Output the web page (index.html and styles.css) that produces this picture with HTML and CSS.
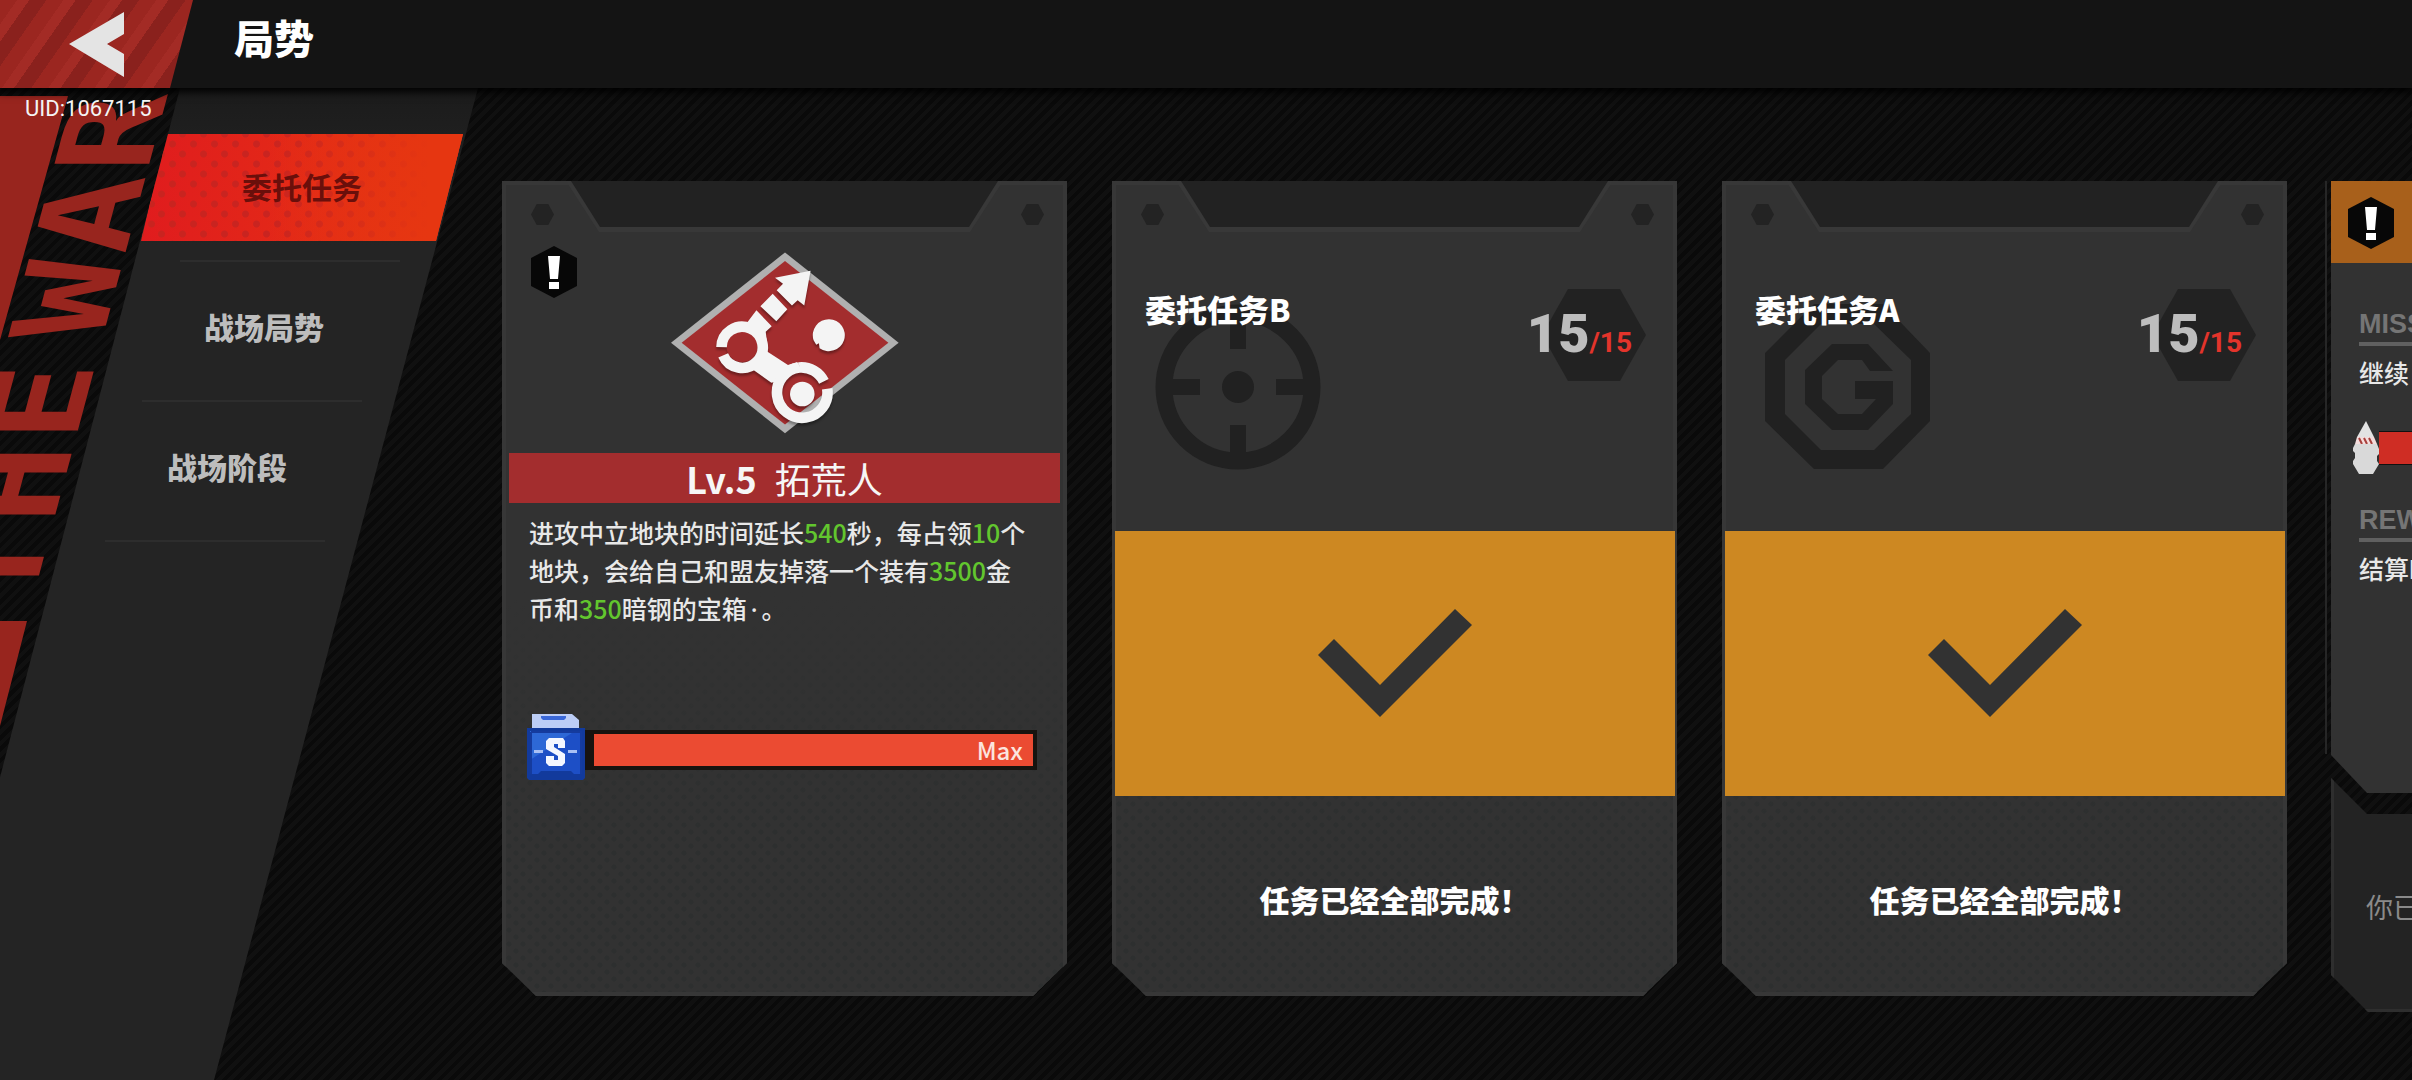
FILE: index.html
```html
<!DOCTYPE html>
<html lang="zh-CN">
<head>
<meta charset="utf-8">
<meta name="viewport" content="width=device-width, initial-scale=1">
<title>局势</title>
<link rel="stylesheet" href="styles.css">
</head>
<body>
<header class="topbar">
  <button class="back" type="button" aria-label="返回">
    <svg class="back-icon" viewBox="0 0 55 65" aria-hidden="true"><path d="M0 32 55 0V22L38 32 55 42V65Z"/></svg>
  </button>
  <h1 class="title">局势</h1>
</header>
<div class="uid">UID:1067115</div>

<div class="layout">
  <aside class="side">
    <div class="banner" aria-hidden="true">
      <svg class="wedges" viewBox="0 0 180 700"><path d="M0 8H68L0 252ZM0 533H27L0 638Z"/></svg>
      <div class="slogan">
        <div class="word"><b>T</b><b>H</b><b>E</b></div>
        <div class="word"><b>W</b><b>A</b><b>R</b></div>
      </div>
    </div>
    <nav class="panel">
      <ul class="menu">
        <li class="menu-item"><button class="tab tab-active" type="button">委托任务</button></li>
        <li class="menu-item"><button class="tab" type="button">战场局势</button></li>
        <li class="menu-item"><button class="tab" type="button">战场阶段</button></li>
      </ul>
    </nav>
  </aside>

  <main class="cards">
    <section class="card">
      <div class="notch"></div><i class="bolt bolt-left"></i><i class="bolt bolt-right"></i>
      <div class="alert alert-card"><svg viewBox="0 0 46 52" aria-hidden="true"><path d="M23 0 46 12V40L23 52 0 40V12Z"/><path class="mark" d="M17 10H29L27 33H19ZM18 36H28V43H18Z"/></svg></div>
      <svg class="emblem" viewBox="60 35 686 547" aria-hidden="true">
        <path fill="#b0b0b0" d="M403 36 745 308 403 580 60 308Z"/>
        <path fill="#a32d2e" d="M403 62 714 308 403 554 92 308Z"/>
        <g class="shade">
          <path d="M480 91 373 112 397 130 378 150 424 196 441 180 461 196ZM366 160 410 207 377 243 329 198ZM317 210 363 258 345 275 350 317 340 328 412 375 440 366 432 390 395 420 362 428 306 388 326 350 330 300 287 250Z"/>
          <circle cx="274" cy="319" r="47" fill="#a32d2e"/>
          <path fill="none" stroke="#f4f4f4" stroke-width="32" d="M212 321A62 62 0 1 1 217 346M446 382A75 75 0 0 1 520 424M530 446A76 76 0 1 1 446 382"/>
          <ellipse cx="455" cy="462" rx="37" ry="37"/>
          <path d="M536 237A48 48 0 1 1 507 324L505 309 497 314 489 300A48 48 0 0 1 536 237Z"/>
        </g>
      </svg>
      <h2 class="band"><b>Lv.5</b><span>拓荒人</span></h2>
      <p class="desc">进攻中立地块的时间延长<em>540</em>秒，每占领<em>10</em>个地块，会给自己和盟友掉落一个装有<em>3500</em>金币和<em>350</em>暗钢的宝箱<span class="dot">·</span>。</p>
      <div class="level">
        <svg class="crate" viewBox="0 0 58 66" aria-hidden="true">
          <path fill="#123a9c" d="M0 14H58V64L56 66H2L0 64Z"/>
          <path fill="#bccdf6" d="M5 14V0H45L52 6V14Z"/>
          <path fill="#3a68d8" d="M14 2H39V4L37 6H16L14 4Z"/>
          <path fill="#1d4fc6" d="M3 17H55V60H47L44 57H14L11 60H3Z"/>
          <path fill="#2d68d6" d="M3 17H48L3 46Z"/>
          <path fill="none" stroke="#153b9e" stroke-width="2" d="M4 18H54V60M4 18V60"/>
          <path fill="#a9c0f4" d="M7 36H16V39H7ZM41 36H50V39H41Z"/>
          <path fill="#f4f7ff" d="M22 24H36L38 27V34H31V30H27V33L38 40V49L35 52H22L19 49V42H27V46H31V42L19 35V27Z"/>
        </svg>
        <div class="bar"><span>Max</span></div>
      </div>
    </section>

    <section class="card">
      <div class="notch"></div><i class="bolt bolt-left"></i><i class="bolt bolt-right"></i>
      <div class="task-head">
        <div class="task-name">
          <h2>委托任务B</h2>
          <svg class="task-icon" viewBox="0 0 166 166" aria-hidden="true"><circle cx="83" cy="83" r="74" fill="none" stroke="#212121" stroke-width="17"/><circle cx="83" cy="83" r="16"/><path d="M75 10H91V45H75ZM75 121H91V156H75ZM10 75H45V91H10ZM121 75H156V91H121Z"/></svg>
        </div>
        <div class="count"><strong>15</strong><span>/15</span></div>
      </div>
      <div class="done"><svg viewBox="0 0 154 108" aria-label="已完成" role="img"><path d="M0 46 16 30 62 76 137 0 154 16 62 108Z"/></svg></div>
      <p class="status">任务已经全部完成！</p>
    </section>

    <section class="card">
      <div class="notch"></div><i class="bolt bolt-left"></i><i class="bolt bolt-right"></i>
      <div class="task-head">
        <div class="task-name">
          <h2>委托任务A</h2>
          <svg class="task-icon" viewBox="0 0 166 166" aria-hidden="true"><path fill-rule="evenodd" d="M49 0H118L165 49V117L118 165H49L0 117V49ZM56 20 20 56V110L56 146H109L146 110V56L109 20Z"/><path d="M67 40H103L128 67H105L97 56H73L57 72V95L73 110H97L111 95H90V77H128V100L103 126H67L40 100V66Z"/></svg>
        </div>
        <div class="count"><strong>15</strong><span>/15</span></div>
      </div>
      <div class="done"><svg viewBox="0 0 154 108" aria-label="已完成" role="img"><path d="M0 46 16 30 62 76 137 0 154 16 62 108Z"/></svg></div>
      <p class="status">任务已经全部完成！</p>
    </section>

    <section class="mission">
      <div class="mission-body">
        <div class="mission-top"><div class="alert"><svg viewBox="0 0 46 52" aria-hidden="true"><path d="M23 0 46 12V40L23 52 0 40V12Z"/><path class="mark" d="M17 10H29L27 33H19ZM18 36H28V43H18Z"/></svg></div></div>
        <div class="mission-info">
          <h3>MISSION</h3>
          <p>继续占领</p>
          <div class="rocket-row">
            <svg class="rocket" viewBox="0 0 26 53" aria-hidden="true"><path fill="#e2e2e2" d="M13 0 21 16H4Z"/><path fill="#f3dcdc" d="M4 16H21L24 23H2Z"/><path stroke="#a8403c" stroke-width="2" d="M6 17 9 23M11 17 14 23M16 17 19 23"/><path fill="#d9d9d9" d="M2 23H24L26 28V33L24 35V40L26 43 20 53H6L0 43V40L2 37V32L0 30V27Z"/></svg>
            <div class="rocket-bar"></div>
          </div>
          <h3>REWARD</h3>
          <p>结算时</p>
        </div>
      </div>
      <div class="mission-foot"><p>你已完成</p></div>
    </section>
  </main>
</div>
</body>
</html>
```
FILE: styles.css
```css
* { box-sizing: border-box; margin: 0; padding: 0; }

body {
  display: flex;
  flex-direction: column;
  min-height: 100vh;
  overflow: hidden;
  font-family: "Noto Sans CJK SC", "Noto Sans", sans-serif;
  color: #e8e8e8;
  background: repeating-linear-gradient(135deg, #0a0a0a 0 4px, #101010 4px 8px);
}

button { border: 0; font: inherit; color: inherit; cursor: pointer; }
ul { list-style: none; }
svg { display: block; }

/* header */
.topbar {
  position: relative;
  z-index: 2;
  display: flex;
  align-items: center;
  height: 88px;
  background: #141414;
  box-shadow: 0 2px 8px 2px #000;
}
.back {
  width: 193px;
  height: 88px;
  padding-left: 69px;
  background: repeating-linear-gradient(125deg, #9b2620 0 14px, #a32b25 14px 24px, #8a211d 24px 38px);
  clip-path: polygon(0 0, 100% 0, 170px 100%, 0 100%);
}
.back-icon { width: 55px; height: 65px; fill: #e4e4e4; }
.title { margin-left: 41px; padding-bottom: 14px; font-size: 40px; line-height: 44px; font-weight: 900; color: #fff; }

.uid {
  position: absolute;
  z-index: 3;
  top: 95px;
  left: 25px;
  font: 400 22px/28px Roboto, sans-serif;
  color: #f4f4f4;
}

.layout { display: flex; flex: 1; }

/* side menu */
.side { position: relative; flex: none; width: 478px; }
.banner { position: absolute; inset: 0; overflow: hidden; }
.wedges { width: 180px; height: 700px; fill: #98251e; }
.slogan {
  position: absolute;
  top: 6px;
  left: 73px;
  display: flex;
  flex-direction: column-reverse;
  gap: 26px;
  transform: skewX(-15deg);
  transform-origin: 100% 0;
  font: 700 130px/100px "DejaVu Sans Mono", monospace;
  color: #98251e;
}
.word { display: flex; flex-direction: column-reverse; gap: 4px; }
.word b { writing-mode: vertical-rl; transform: rotate(180deg); }

.panel {
  position: relative;
  height: 100%;
  padding: 34px 0 0 141px;
  background: linear-gradient(#1b1b1b, #1f1f1f 46px, #242424 160px);
  clip-path: polygon(180px 0, 100% 0, 214px 100%, -79px 100%);
}
.menu-item {
  width: 322px;
  height: 140px;
  padding-top: 12px;
  background: linear-gradient(#2d2d2d, #2d2d2d) 39px 100% / 220px 2px no-repeat;
}
.menu-item:nth-child(2) { margin-left: -38px; }
.menu-item:nth-child(3) { margin-left: -75px; }
.tab {
  width: 100%;
  height: 107px;
  padding-bottom: 4px;
  font-size: 30px;
  font-weight: 900;
  color: #bdbdbd;
  background: none;
}
.tab-active {
  font-weight: 700;
  color: #6a0f0b;
  background:
    linear-gradient(90deg, transparent 40%, #e63611 90%),
    radial-gradient(circle, #c92420 3px, transparent 4px) 0 0 / 21px 20px,
    radial-gradient(circle, #c92420 3px, transparent 4px) 10px 10px / 21px 20px,
    linear-gradient(90deg, #e01c1e, #e63611);
  clip-path: polygon(25px 0, 100% 0, calc(100% - 27px) 100%, 0 100%);
}

/* card strip */
.cards {
  display: flex;
  flex: 1;
  align-items: flex-start;
  gap: 45px;
  min-width: 0;
  padding: 93px 0 68px 24px;
  overflow: hidden;
}
.card {
  position: relative;
  display: flex;
  flex: 0 0 565px;
  flex-direction: column;
  min-height: 815px;
  background:
    linear-gradient(#323232 50%, transparent 80%),
    radial-gradient(circle, #2d2f2f 2px, transparent 3px) 0 0 / 14px 14px,
    radial-gradient(circle, #2d2f2f 2px, transparent 3px) 7px 7px / 14px 14px,
    #323232;
  box-shadow: inset 0 0 0 4px #373737;
  clip-path: polygon(0 0, 100% 0, 100% calc(100% - 33px), calc(100% - 34px) 100%, 34px 100%, 0 calc(100% - 33px));
}
.notch {
  position: absolute;
  top: 0;
  left: 64px;
  right: 64px;
  height: 51px;
  background: #383838;
  clip-path: polygon(0 0, 100% 0, calc(100% - 33px) 100%, 33px 100%);
}
.notch::before {
  content: "";
  display: block;
  height: 46px;
  margin: 0 5px;
  background: #222;
  clip-path: polygon(0 0, 100% 0, calc(100% - 29px) 100%, 29px 100%);
}
.bolt {
  position: absolute;
  top: 23px;
  width: 23px;
  height: 21px;
  background: #232323;
  clip-path: polygon(25% 0, 75% 0, 100% 50%, 75% 100%, 25% 100%, 0 50%);
}
.bolt-left { left: 29px; }
.bolt-right { right: 23px; }

.alert { width: 46px; height: 52px; fill: #070707; }
.alert .mark { fill: #fff; }
.alert-card { position: absolute; top: 65px; left: 29px; }

.emblem { width: 228px; height: 182px; margin: 71px auto 19px; fill: #f4f4f4; }
.shade { filter: drop-shadow(0 8px 3px #0005); }
.band {
  display: flex;
  align-items: center;
  justify-content: center;
  gap: 18px;
  height: 50px;
  margin: 0 7px;
  font-size: 36px;
  line-height: 46px;
  font-weight: 400;
  color: #f6f6f6;
  background: #a32d2e;
}
.desc { padding: 10px 38px 0 27px; font-size: 25px; line-height: 38px; font-weight: 500; }
.desc em { font-style: normal; color: #62c62e; }
.dot { margin: 0 4px; font-family: "Noto Sans", sans-serif; }
.level { display: flex; align-items: flex-end; margin: 86px 30px 0 25px; }
.crate { flex: none; width: 58px; height: 66px; }
.bar {
  flex: 1;
  height: 40px;
  margin-bottom: 10px;
  padding: 0 10px;
  border: 4px solid #17130f;
  border-left-width: 9px;
  font-size: 24px;
  line-height: 32px;
  font-weight: 500;
  text-align: right;
  color: #fbe4de;
  background: #eb4b32;
}

.task-head {
  display: flex;
  justify-content: space-between;
  height: 350px;
  padding: 108px 31px 0 33px;
}
.task-name h2 { position: relative; z-index: 1; font-size: 31px; line-height: 40px; font-weight: 900; color: #fff; }
.task-icon { width: 166px; height: 166px; margin: -25px 0 0 10px; fill: #212121; }
.count {
  position: relative;
  z-index: 0;
  display: flex;
  align-items: baseline;
  justify-content: flex-end;
  width: 120px;
  height: 92px;
  padding: 13px 14px 0 0;
  font: 700 28px/64px Roboto, sans-serif;
  color: #e3342b;
}
.count::before {
  content: "";
  position: absolute;
  z-index: -1;
  top: 0;
  right: 0;
  width: 104px;
  height: 92px;
  background: #222;
  clip-path: polygon(25% 0, 75% 0, 100% 50%, 75% 100%, 25% 100%, 0 50%);
}
.count strong { font-size: 54px; color: #bdbdbd; }

.done {
  display: grid;
  place-items: center;
  height: 265px;
  margin: 0 2px 0 3px;
  padding-bottom: 2px;
  background: #cd8822;
}
.done svg { width: 154px; height: 108px; fill: #323232; }
.status { padding-top: 81px; font-size: 30px; line-height: 44px; font-weight: 900; text-align: center; color: #fff; }

/* mission column, continues past the window edge */
.mission { flex: 0 0 565px; margin-left: -7px; padding-left: 6px; background: linear-gradient(#262626, #262626) 0 0 / 2px 573px no-repeat; }
.mission-body {
  min-height: 612px;
  background: #323232;
  clip-path: polygon(0 0, 100% 0, 100% 100%, 36px 100%, 0 calc(100% - 38px));
}
.mission-top { height: 82px; padding: 16px 17px; background: #a8601b; }
.mission-info { padding: 45px 28px 0; }
.mission-info h3 {
  padding-bottom: 2px;
  border-bottom: 4px solid #606060;
  font: 700 27px/32px "Liberation Sans", sans-serif;
  color: #757575;
}
.mission-info p { padding-top: 7px; font-size: 25px; line-height: 38px; font-weight: 500; }
.rocket-row { display: flex; align-items: center; margin: 30px 0 30px -6px; }
.rocket { flex: none; width: 26px; height: 53px; }
.rocket-bar { flex: 1; height: 34px; border-block: 1px solid #111; background: #cf2d24; }
.mission-foot {
  min-height: 234px;
  margin-top: -15px;
  padding: 107px 35px 0;
  background: #232323;
  box-shadow: inset 0 0 0 3px #2e2e2e;
  clip-path: polygon(0 0, 36px 36px, 100% 36px, 100% 100%, 37px 100%, 0 calc(100% - 37px));
}
.mission-foot p { font-size: 27px; line-height: 44px; color: #8a8a8a; }
```
